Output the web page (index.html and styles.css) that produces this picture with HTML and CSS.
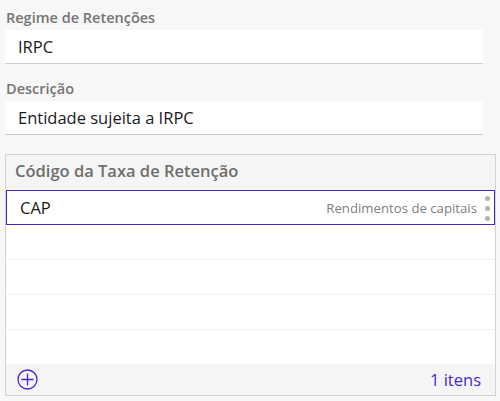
FILE: index.html
```html
<!DOCTYPE html>
<html lang="pt">
<head>
<meta charset="utf-8">
<link rel="stylesheet" href="styles.css">
</head>
<body>
<div class="form">
  <div class="field">
    <div class="label">Regime de Retenções</div>
    <div class="input">IRPC</div>
  </div>
  <div class="field">
    <div class="label">Descrição</div>
    <div class="input">Entidade sujeita a IRPC</div>
  </div>
</div>
<div class="panel">
  <div class="panel-head">Código da Taxa de Retenção</div>
  <div class="rows">
    <div class="row selected">
      <span class="code">CAP</span>
      <span class="desc">Rendimentos de capitais</span>
      <span class="kebab"><i></i><i></i><i></i></span>
    </div>
    <div class="row"></div>
    <div class="row"></div>
    <div class="row"></div>
    <div class="row last"></div>
  </div>
  <div class="panel-foot">
    <svg class="add" width="21" height="21" viewBox="0 0 21 21">
      <circle cx="10.5" cy="10.5" r="9.5" fill="none" stroke="#4a27d6" stroke-width="1.3"/>
      <path d="M10.5 4.5v12M4.5 10.5h12" stroke="#4a27d6" stroke-width="1.3"/>
    </svg>
    <span class="count">1 itens</span>
  </div>
</div>
</body>
</html>
```
FILE: styles.css
```css
html, body {
  margin: 0;
  padding: 0;
  background: #f7f7f7;
  font-family: "Open Sans", "Noto Sans", sans-serif;
}
.form {
  padding-left: 5px;
  width: 478px;
}
.field {
  margin-bottom: 7px;
}
.label {
  height: 30px;
  box-sizing: border-box;
  padding: 8px 0 0 1px;
  font-size: 14.5px;
  line-height: 20px;
  font-weight: 600;
  color: #757575;
}
.input {
  height: 33px;
  background: #fff;
  border-bottom: 1px solid #cfcfcf;
  padding-left: 13px;
  font-size: 16.5px;
  line-height: 33px;
  color: #1a1a1a;
}
.panel {
  margin: 19px 0 0 5px;
  width: 489px;
  border: 1px solid #d3d3d3;
  background: #fff;
}
.panel-head {
  height: 35px;
  background: #f5f5f5;
  padding-left: 9px;
  font-size: 16.5px;
  font-weight: 600;
  line-height: 32px;
  color: #6e6e6e;
}
.row {
  height: 34px;
  border-bottom: 1px solid #f0f0f0;
  box-sizing: content-box;
}
.row.last {
  border-bottom: none;
}
.row.selected {
  height: 33px;
  border: 1px solid #4a22d4;
  display: flex;
  align-items: center;
  padding: 0 4px 0 13px;
}
.code {
  font-size: 16.5px;
  color: #1a1a1a;
  flex: 1;
}
.desc {
  font-size: 13.2px;
  color: #808080;
  margin-right: 8px;
}
.kebab {
  display: flex;
  flex-direction: column;
  gap: 5px;
  align-self: flex-start;
  padding-top: 5px;
}
.kebab i {
  display: block;
  width: 5px;
  height: 5px;
  border-radius: 50%;
  background: #b3b3b3;
}
.panel-foot {
  height: 31px;
  background: #f5f5f5;
  display: flex;
  align-items: center;
  justify-content: space-between;
  padding: 0 14px 0 11px;
}
.add {
  display: block;
}
.count {
  font-size: 16.5px;
  color: #4a27d6;
}
```
